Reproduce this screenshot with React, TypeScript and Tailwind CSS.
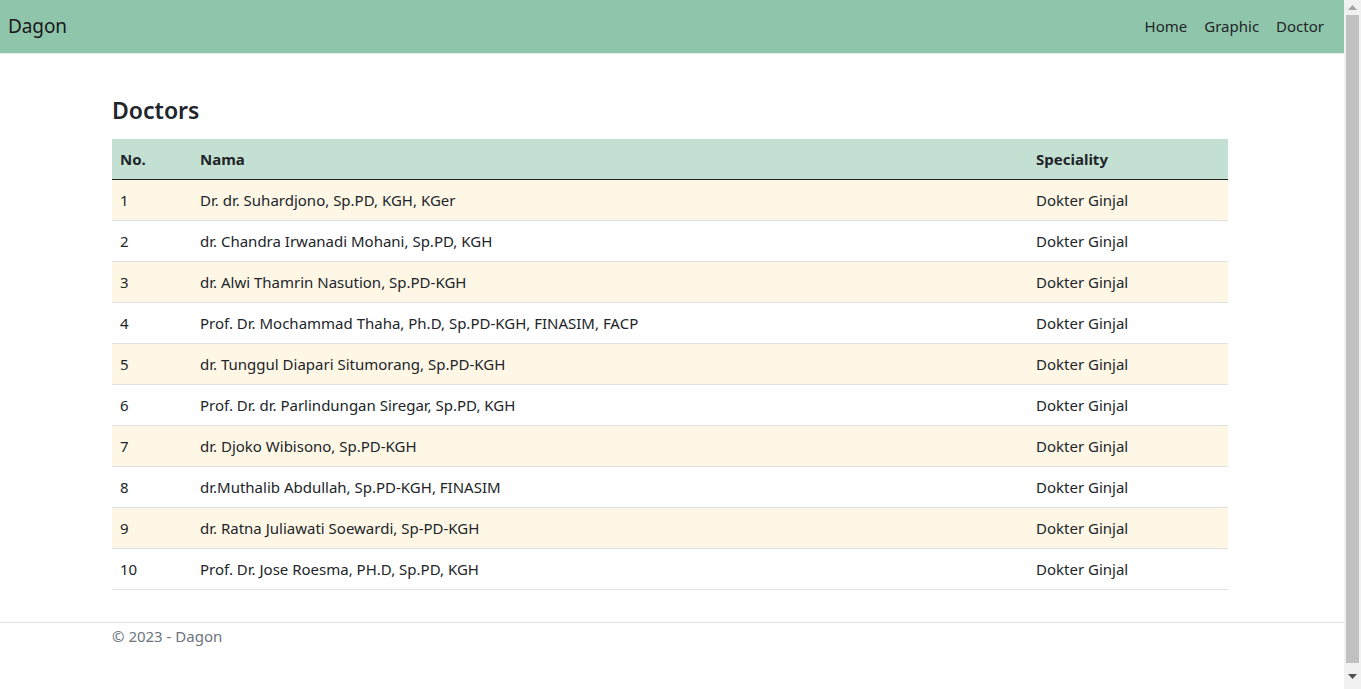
import React from "react";

const doctors = [
  "Dr. dr. Suhardjono, Sp.PD, KGH, KGer",
  "dr. Chandra Irwanadi Mohani, Sp.PD, KGH",
  "dr. Alwi Thamrin Nasution, Sp.PD-KGH",
  "Prof. Dr. Mochammad Thaha, Ph.D, Sp.PD-KGH, FINASIM, FACP",
  "dr. Tunggul Diapari Situmorang, Sp.PD-KGH",
  "Prof. Dr. dr. Parlindungan Siregar, Sp.PD, KGH",
  "dr. Djoko Wibisono, Sp.PD-KGH",
  "dr.Muthalib Abdullah, Sp.PD-KGH, FINASIM",
  "dr. Ratna Juliawati Soewardi, Sp-PD-KGH",
  "Prof. Dr. Jose Roesma, PH.D, Sp.PD, KGH",
];

function Scrollbar() {
  return (
    <div className="w-[17px] h-[689px] bg-[#f1f1f1] flex flex-col items-center shrink-0">
      <div className="h-[15px] flex items-center justify-center">
        <svg width="9" height="5" viewBox="0 0 9 5">
          <polygon points="4.5,0 9,5 0,5" fill="#a3a3a3" />
        </svg>
      </div>
      <div className="w-[13px] flex-1 bg-[#c1c1c1] ml-[2px] mr-[2px]" />
      <div className="h-[26px] flex items-center justify-center">
        <svg width="9" height="5" viewBox="0 0 9 5">
          <polygon points="0,0 9,0 4.5,5" fill="#505050" />
        </svg>
      </div>
    </div>
  );
}

export default function App() {
  return (
    <div
      className="h-[689px] overflow-hidden flex bg-white text-[#212529]"
      style={{ fontFamily: '"Noto Sans", "Open Sans", sans-serif' }}
    >
      <div className="flex-1 min-w-0">
        <nav className="h-[54px] bg-[#8fc5aa] border-b border-[#e5e7eb] flex items-center justify-between pl-[8px] pr-[20px]">
          <span className="text-[19px] text-[#1a1a1a] tracking-[-0.1px]">Dagon</span>
          <div className="flex items-center text-[15px] text-[#212529] gap-[17px]">
            <a>Home</a>
            <a>Graphic</a>
            <a>Doctor</a>
          </div>
        </nav>
        <main className="pl-[112px] pb-[32px]">
          <div className="w-[1116px]">
            <h3 className="pt-[43px] pb-[14px] text-[23px] font-semibold leading-[1.2]">Doctors</h3>
            <table className="w-full border-collapse text-[15px]">
              <thead>
                <tr className="bg-[#c4e0d3] border-b border-[#212529] h-[41px] text-left">
                  <th className="w-[80px] px-[8px] font-bold">No.</th>
                  <th className="px-[8px] font-bold">Nama</th>
                  <th className="w-[200px] px-[8px] font-bold">Speciality</th>
                </tr>
              </thead>
              <tbody>
                {doctors.map((d, i) => (
                  <tr
                    key={i}
                    className={`h-[41px] border-b border-[#dee2e6] ${i % 2 === 0 ? "bg-[#fef7e6]" : "bg-white"}`}
                  >
                    <td className="px-[8px]">{i + 1}</td>
                    <td className="px-[8px]">{d}</td>
                    <td className="px-[8px]">Dokter Ginjal</td>
                  </tr>
                ))}
              </tbody>
            </table>
          </div>
        </main>
        <footer className="border-t border-[#dee2e6] pl-[112px] pt-[2px] text-[#6c757d] text-[15px]">
          © 2023 - Dagon
        </footer>
      </div>
      <Scrollbar />
    </div>
  );
}
